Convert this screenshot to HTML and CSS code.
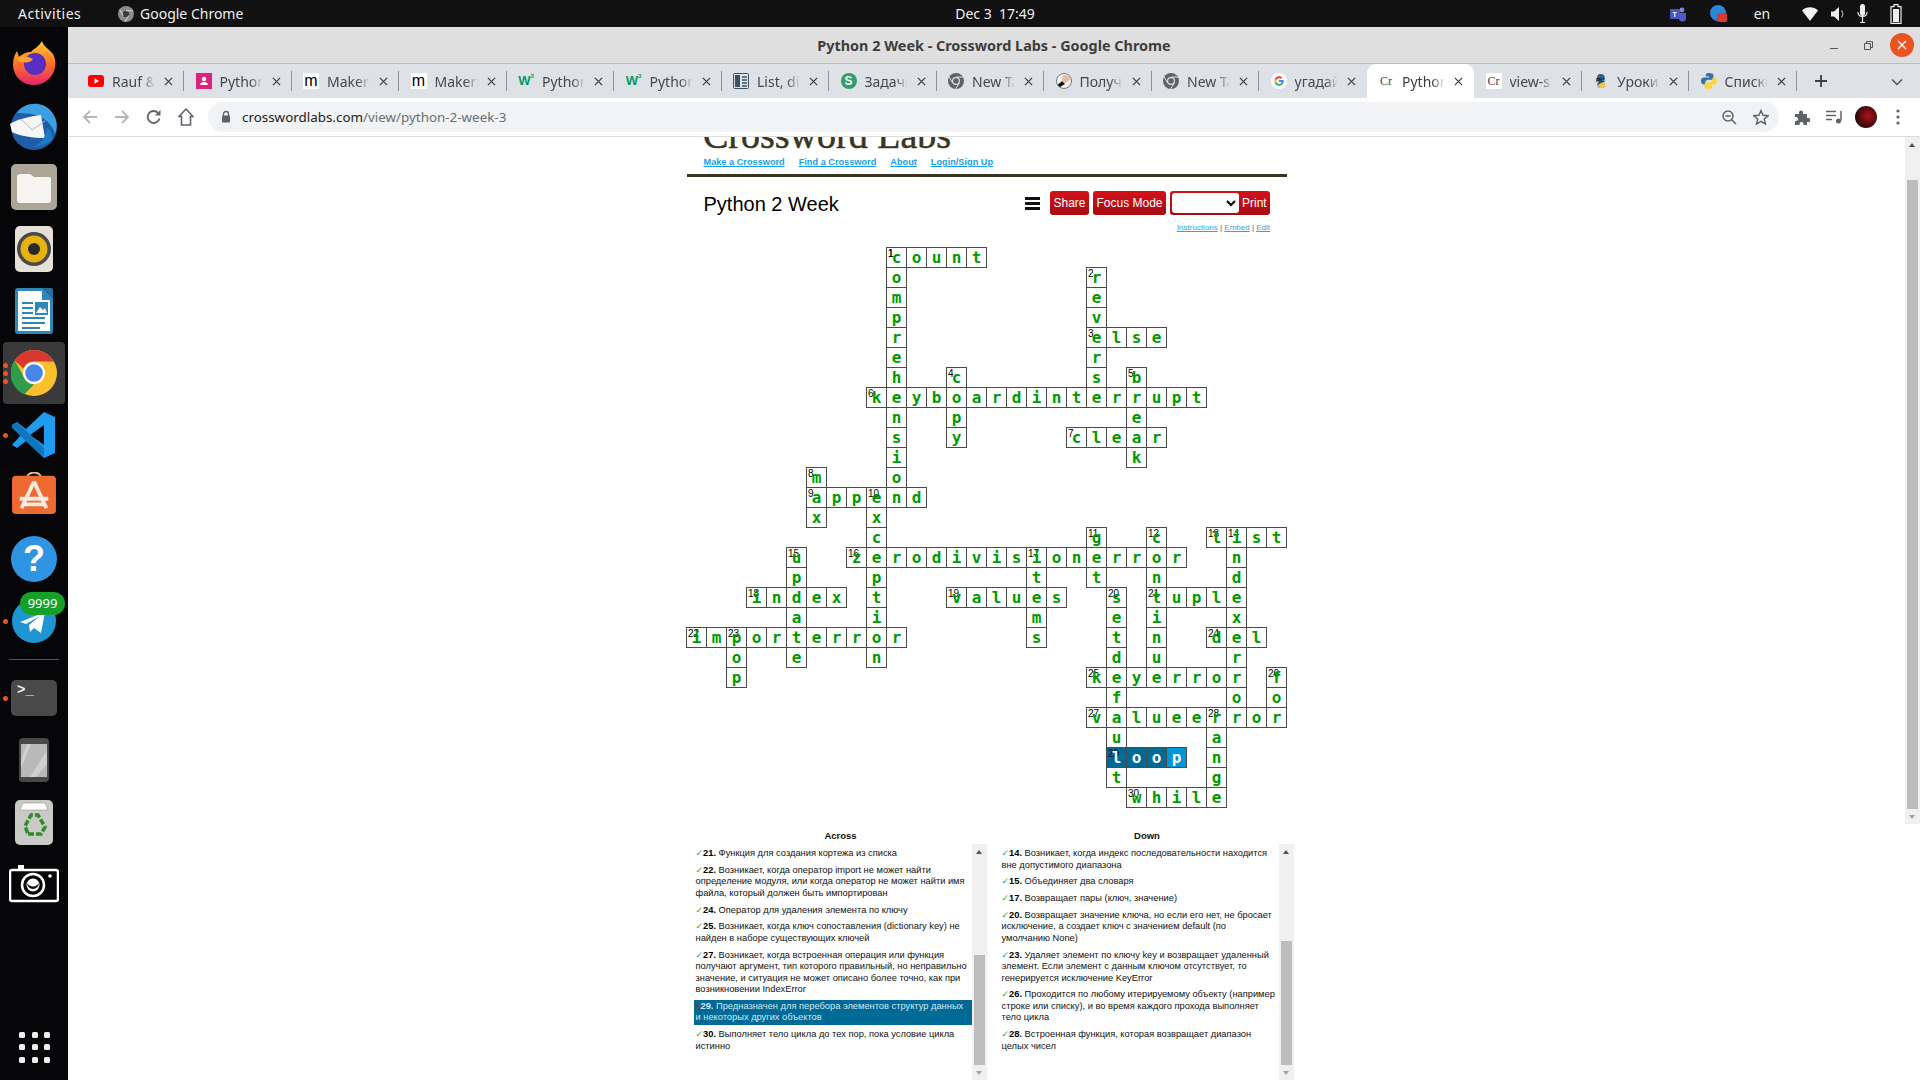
FILE: index.html
```html
<!DOCTYPE html>
<html lang="ru">
<head>
<meta charset="utf-8">
<title>Python 2 Week - Crossword Labs - Google Chrome</title>
<link rel="stylesheet" href="styles.css">
</head>
<body>
<header class="topbar">
  <div class="top-left">
    <span class="activities">Activities</span>
    <svg class="app-ico" width="16" height="16" viewBox="0 0 16 16"><circle cx="8" cy="8" r="8" fill="#8b8b8b"/><circle cx="8" cy="8" r="3.2" fill="#3a3a3a"/><path d="M8 4.8h7M5.2 9.5 1.8 3.6M10.8 9.5 7 15.8" stroke="#ddd" stroke-width="1"/></svg>
    <span class="app-name">Google Chrome</span>
  </div>
  <span class="clock">Dec 3&nbsp;&nbsp;17:49</span>
  <div class="tray">
    <span class="t36"><svg width="18" height="18" viewBox="0 0 18 18"><rect x="1" y="4" width="10" height="10" rx="1" fill="#4b53bc"/><circle cx="13" cy="5" r="2.4" fill="#7b83eb"/><path d="M10 8h7v5a3.5 3.5 0 0 1-7 0z" fill="#5059c9"/><text x="3.5" y="12" class="teams-t">T</text></svg></span>
    <span class="t46"><svg width="18" height="20" viewBox="0 0 18 20"><circle cx="8" cy="9" r="8" fill="#2a86d8"/><rect x="7" y="9" width="10" height="9" rx="1.5" fill="#d33c2e"/></svg></span>
    <span class="t40 lang">en</span>
    <span class="t28"><svg width="16" height="14" viewBox="0 0 16 14"><path d="M0 3.5C4.500-.7 11.500-.7 16 3.500L8 14z" fill="#f2f2f2"/></svg></span>
    <span class="t30"><svg width="16" height="14" viewBox="0 0 16 14"><path d="M0 4.500h3L8 0v14L3 9.500H0z" fill="#eee"/><path d="M10.500 3.500c1.500 2 1.500 5 0 7" stroke="#999" stroke-width="1.300" fill="none"/></svg></span>
    <span class="t18"><svg width="16" height="20" viewBox="0 0 16 20"><rect x="5" y="0" width="5" height="12" rx="2.500" fill="#eee"/><path d="M3 8c0 6 9 6 9 0M7.500 13v5M5 18.500h5" stroke="#eee" stroke-width="1.200" fill="none"/></svg></span>
    <span class="t48"><svg width="12" height="20" viewBox="0 0 12 20"><path d="M4 .6h4v2h3v16.800H1V2.600h3z" fill="none" stroke="#eee" stroke-width="1.200"/><rect x="3" y="5" width="6" height="13" fill="#eee"/></svg></span>
  </div>
</header>
<div class="desk">
  <nav class="dock">
    <div class="dk"><svg width="44" height="46" viewBox="0 0 44 46"><defs><linearGradient id="ff" x1="0" y1="0" x2="0" y2="1"><stop offset="0" stop-color="#ffd030"/><stop offset=".55" stop-color="#ff6a2a"/><stop offset="1" stop-color="#e3246e"/></linearGradient></defs><path d="M30 1c1 5 7 8 11 13 3 5 3 12 1 17-3 8-11 14-20 14C10 45 1 36 1 24c0-5 2-10 4-13l2 6c3-3 7-5 12-5 2-3 8-5 11-11z" fill="url(#ff)"/><circle cx="23" cy="24" r="11" fill="#5a2ec0"/><path d="M4 18c5-3 12-2 17 1-2 3-6 4-10 3-3 0-5-2-7-4z" fill="#ffa52e"/></svg></div>
    <div class="dk"><svg width="50" height="50" viewBox="0 0 50 50"><circle cx="25" cy="27" r="23" fill="#1f5ea6"/><path d="M8 13C15 2 33 0 42 11c6 7 7 15 4 23-3-11-12-18-24-20-5-1-10-1-14-1z" fill="#3b9fe0"/><path d="M1 24c8-5 17-7 31-9l4 23c-12 0-25-2-33-6z" fill="#f6f6f6"/><path d="M12 19l11 11 13-9" fill="none" stroke="#b5b5b5" stroke-width="1"/><path d="M38 28c5 3 6 8 5 12-5 4-12 7-19 7 7-3 13-9 14-19z" fill="#1f78c8"/></svg></div>
    <div class="dk"><svg width="46" height="46" viewBox="0 0 46 46"><rect width="46" height="46" rx="5" fill="#aba698"/><path d="M6 13c0-2 1-3 3-3h10l4 3h15c2 0 2 1 2 3v20c0 2-1 3-3 3H9c-2 0-3-1-3-3z" fill="#f6f5f2"/></svg></div>
    <div class="dk"><svg width="38" height="46" viewBox="0 0 38 46"><rect width="38" height="46" rx="5" fill="#e5e1d7"/><circle cx="19" cy="23" r="17" fill="#4a4a4a"/><circle cx="19" cy="23" r="13.500" fill="#e6b30e"/><circle cx="19" cy="23" r="6" fill="#2a2a2a"/></svg></div>
    <div class="dk"><svg width="38" height="46" viewBox="0 0 38 46"><path d="M2 0h26l10 10v33a3 3 0 0 1-3 3H3a3 3 0 0 1-3-3V2z" fill="#2f86b9"/><path d="M3 3h24v9h8v31H3z" fill="#fff"/><path d="M28 0h8a2 2 0 0 1 2 2v8z" fill="#2b6f9e"/><path d="M7 15h11M7 20h11M7 25h11M7 30h23M7 35h23M7 40h18" stroke="#2f86b9" stroke-width="2"/><rect x="20" y="14" width="13" height="13" fill="#2f86b9"/><path d="M21 25l4-6 3 3 2-2 2 5z" fill="#fff"/></svg></div>
    <div class="dk dk-on"><i class="pip p1"></i><i class="pip p2"></i><i class="pip p3"></i><svg width="46" height="46" viewBox="0 0 46 46"><circle cx="23" cy="23" r="23" fill="#fbc02d"/><path d="M23 0a23 23 0 0 1 20 11.500H23a11.500 11.500 0 0 0-10.600 7L3.700 10.500A23 23 0 0 1 23 0z" fill="#d93831"/><path d="M3.700 10.500 13 27a11.500 11.500 0 0 0 10 7.500l-9.800 10A23 23 0 0 1 3.700 10.500z" fill="#2e9e4c"/><circle cx="23" cy="23" r="11" fill="#fff"/><circle cx="23" cy="23" r="8.800" fill="#4a86e8"/></svg></div>
    <div class="dk"><i class="pip"></i><svg width="44" height="46" viewBox="0 0 44 46"><path d="M32 0l11 5v36l-11 5-18-17-9 7-5-3 9-10-9-10 5-3 9 7z" fill="#1f9cf0"/><path d="M32 13 18 23l14 10z" fill="#06060a"/><path d="M0 13l5-3 27 26v10L0 16z" fill="#0f76bd"/></svg></div>
    <div class="dk"><svg class="store" width="46" height="42" viewBox="0 0 46 44"><path d="M15 8c0-10 16-10 16 0" fill="none" stroke="#eeb788" stroke-width="2"/><rect y="4" width="46" height="40" rx="4" fill="#ed6a32"/><path d="M23 10 10 38M23 10l13 28M8 28h30M12 34h22" stroke="#fbeae0" stroke-width="4" fill="none"/></svg></div>
    <div class="dk"><span class="help">?</span></div>
    <div class="dk"><i class="pip"></i><svg width="44" height="44" viewBox="0 0 44 44"><circle cx="22" cy="22" r="22" fill="#1e96d4"/><path d="M8 23 33 13l-4 21-7-5-4 4-1-7 11-9-14 8z" fill="#fff"/></svg><span class="badge">9999</span></div>
    <hr class="dock-sep">
    <div class="dk"><i class="pip"></i><div class="term"><span>&gt;_</span></div></div>
    <div class="dk"><svg width="30" height="44" viewBox="0 0 30 44"><rect width="30" height="44" rx="4" fill="#484848"/><rect x="2" y="6" width="26" height="33" fill="#b9b9b9"/><path d="M12 6 2 30v-8L8 6zM28 12v14L17 39h-6z" fill="#cfcfcf"/></svg></div>
    <div class="dk"><svg width="38" height="45" viewBox="0 0 38 45"><rect width="38" height="45" rx="5" fill="#c9c9c5"/><path d="M5 10 8 3h22l3 7z" fill="#fff" stroke="#999" stroke-width=".6"/><g fill="none" stroke="#2e8b2e" stroke-width="3.500" stroke-dasharray="6 2"><path d="M13 34h13l4-7-7-12h-7l-6 11z"/></g></svg></div>
    <div class="dk"><svg width="50" height="38" viewBox="0 0 50 38"><path d="M3 5h44a2 2 0 0 1 2 2v27a2 2 0 0 1-2 2H3a2 2 0 0 1-2-2V7a2 2 0 0 1 2-2z" fill="none" stroke="#fff" stroke-width="2.500"/><rect x="9" y="0" width="6" height="4" fill="#fff"/><circle cx="24" cy="20" r="11" fill="none" stroke="#fff" stroke-width="2.500"/><circle cx="24" cy="20" r="6.500" fill="#fff"/><path d="M18 18a6 6 0 0 0 12 0a7 7 0 0 1-12 0" fill="#111"/><circle cx="41" cy="11" r="1.800" fill="#fff"/></svg></div>
    <div class="dk dk-apps"><div class="dots"><i></i><i></i><i></i><i></i><i></i><i></i><i></i><i></i><i></i></div></div>
  </nav>
  <div class="window">
    <div class="titlebar">
      <span class="wintitle">Python 2 Week - Crossword Labs - Google Chrome</span>
      <div class="winbtns">
        <span class="wb"><i class="min"></i></span>
        <span class="wb"><svg width="9" height="9" viewBox="0 0 9 9"><path d="M2.500 2.500V.5h6v6h-2M.5 2.500h6v6h-6z" fill="none" stroke="#555"/></svg></span>
        <span class="wb close"><svg width="10" height="10" viewBox="0 0 10 10"><path d="M1 1l8 8M9 1 1 9" stroke="#fff" stroke-width="1.300"/></svg></span>
      </div>
    </div>
    <div class="tabstrip">
      <div class="tab"><span class="fav"><svg width="16" height="16" viewBox="0 0 16 16"><rect y="2" width="16" height="12" rx="3" fill="#f00"/><path d="M6.500 5.200v5.600L11 8z" fill="#fff"/></svg></span><span class="tt">Rauf &amp; Faik</span><svg class="tx" viewBox="0 0 10 10"><path d="M1 1l8 8M9 1 1 9"/></svg></div>
      <div class="tab"><span class="fav"><svg width="16" height="16" viewBox="0 0 16 16"><rect width="16" height="16" fill="#e0207e"/><circle cx="8" cy="6" r="2.200" fill="#fff"/><path d="M4 12c0-4 8-4 8 0z" fill="#fff"/></svg></span><span class="tt">Python</span><svg class="tx" viewBox="0 0 10 10"><path d="M1 1l8 8M9 1 1 9"/></svg></div>
      <div class="tab"><span class="fav fav-w">m</span><span class="tt">Makers</span><svg class="tx" viewBox="0 0 10 10"><path d="M1 1l8 8M9 1 1 9"/></svg></div>
      <div class="tab"><span class="fav fav-w">m</span><span class="tt">Makers</span><svg class="tx" viewBox="0 0 10 10"><path d="M1 1l8 8M9 1 1 9"/></svg></div>
      <div class="tab"><span class="fav fav-g">W<sup>3</sup></span><span class="tt">Python</span><svg class="tx" viewBox="0 0 10 10"><path d="M1 1l8 8M9 1 1 9"/></svg></div>
      <div class="tab"><span class="fav fav-g">W<sup>3</sup></span><span class="tt">Python</span><svg class="tx" viewBox="0 0 10 10"><path d="M1 1l8 8M9 1 1 9"/></svg></div>
      <div class="tab"><span class="fav"><svg width="16" height="16" viewBox="0 0 16 16"><rect x=".5" y=".5" width="15" height="15" rx="1" fill="#dfe3e8" stroke="#3c5064"/><rect x="2" y="2" width="5" height="12" fill="#3c5064"/><path d="M9 4h5M9 7h5M9 10h5M9 13h5" stroke="#3c5064" stroke-width="1.500"/></svg></span><span class="tt">List, dict</span><svg class="tx" viewBox="0 0 10 10"><path d="M1 1l8 8M9 1 1 9"/></svg></div>
      <div class="tab"><span class="fav fav-s">S</span><span class="tt">Задачи</span><svg class="tx" viewBox="0 0 10 10"><path d="M1 1l8 8M9 1 1 9"/></svg></div>
      <div class="tab"><span class="fav"><svg width="16" height="16" viewBox="0 0 16 16"><circle cx="8" cy="8" r="8" fill="#5f6368"/><circle cx="8" cy="8" r="4" fill="#dee1e6"/><circle cx="8" cy="8" r="2.800" fill="#5f6368"/><path d="M8 4h7.500M4.600 10 1 3.500M11.400 10 7.500 16" stroke="#dee1e6"/></svg></span><span class="tt">New Tab</span><svg class="tx" viewBox="0 0 10 10"><path d="M1 1l8 8M9 1 1 9"/></svg></div>
      <div class="tab"><span class="fav"><svg width="16" height="16" viewBox="0 0 16 16"><circle cx="8" cy="8" r="7.500" fill="#f4f4f4" stroke="#777"/><path d="M7 2l6 1 1 4-5 3-3-3z" fill="#e8b9a0"/><path d="M1.500 12 6 8l3 3-5 3z" fill="#111"/></svg></span><span class="tt">Получить</span><svg class="tx" viewBox="0 0 10 10"><path d="M1 1l8 8M9 1 1 9"/></svg></div>
      <div class="tab"><span class="fav"><svg width="16" height="16" viewBox="0 0 16 16"><circle cx="8" cy="8" r="8" fill="#5f6368"/><circle cx="8" cy="8" r="4" fill="#dee1e6"/><circle cx="8" cy="8" r="2.800" fill="#5f6368"/><path d="M8 4h7.500M4.600 10 1 3.500M11.400 10 7.500 16" stroke="#dee1e6"/></svg></span><span class="tt">New Tab</span><svg class="tx" viewBox="0 0 10 10"><path d="M1 1l8 8M9 1 1 9"/></svg></div>
      <div class="tab nosep"><span class="fav"><svg width="16" height="16" viewBox="0 0 16 16"><circle cx="8" cy="8" r="8" fill="#fff"/><path d="M8 5.200a2.800 2.800 0 0 1 1.900.7l1.400-1.400A4.800 4.800 0 0 0 3.700 6l1.600 1.300A2.900 2.900 0 0 1 8 5.200z" fill="#ea4335"/><path d="M3.700 6a4.800 4.800 0 0 0 0 4l1.600-1.300a2.900 2.900 0 0 1 0-1.400z" fill="#fbbc05"/><path d="M8 12.800a4.700 4.700 0 0 0 3.200-1.200l-1.500-1.200A2.900 2.900 0 0 1 5.300 8.700L3.700 10A4.800 4.800 0 0 0 8 12.800z" fill="#34a853"/><path d="M12.700 7H8v1.900h2.700c-.1.600-.5 1.100-1 1.500l1.500 1.200c1-.9 1.600-2.200 1.600-3.600 0-.4 0-.7-.1-1z" fill="#4285f4"/></svg></span><span class="tt">угадай</span><svg class="tx" viewBox="0 0 10 10"><path d="M1 1l8 8M9 1 1 9"/></svg></div>
      <div class="tab active"><span class="fav fav-c">Cr</span><span class="tt">Python 2</span><svg class="tx" viewBox="0 0 10 10"><path d="M1 1l8 8M9 1 1 9"/></svg></div>
      <div class="tab"><span class="fav fav-c fav-cw">Cr</span><span class="tt">view-s</span><svg class="tx" viewBox="0 0 10 10"><path d="M1 1l8 8M9 1 1 9"/></svg></div>
      <div class="tab"><span class="fav"><svg width="16" height="16" viewBox="0 0 16 16"><path d="M8 1C4 1 4 3 4 8h4c-5 0-5 7 0 7 4 0 4-2 4-7H8c5 0 5-7 0-7z" fill="#2d5f9e"/><path d="M12 8c0 5 0 7-4 7-2 0-3-1-3-3z" fill="#f7c83a"/><text x="3" y="9" class="ru-t">RU</text></svg></span><span class="tt">Уроки</span><svg class="tx" viewBox="0 0 10 10"><path d="M1 1l8 8M9 1 1 9"/></svg></div>
      <div class="tab"><span class="fav"><svg width="16" height="16" viewBox="0 0 16 16"><path d="M8 0C4.800 0 4.800 1.500 4.800 3.500H8.200v1H3C1 4.500 0 6 0 8s1 3.500 3 3.500h1.500V9.400c0-1.600 1.200-2.700 2.700-2.700h3.300c1.300 0 2-.9 2-2V2.200C12.500.800 10.500 0 8 0z" fill="#3572a5"/><path d="M8 16c3.200 0 3.200-1.500 3.200-3.500H7.800v-1H13c2 0 3-1.500 3-3.500s-1-3.500-3-3.500h-1.500v2.100c0 1.600-1.200 2.700-2.700 2.700H5.500c-1.300 0-2 .9-2 2v2.500c0 1.400 2 2.200 4.500 2.200z" fill="#ffd43b"/></svg></span><span class="tt">Списки</span><svg class="tx" viewBox="0 0 10 10"><path d="M1 1l8 8M9 1 1 9"/></svg></div>
      <svg class="plus" width="14" height="14" viewBox="0 0 14 14"><path d="M7 1v12M1 7h12" stroke="#3c4043" stroke-width="1.800"/></svg>
      <svg class="chev" width="12" height="8" viewBox="0 0 12 8"><path d="M1 1.500 6 6.500 11 1.500" fill="none" stroke="#555" stroke-width="1.500"/></svg>
    </div>
    <div class="toolbar">
      <span class="tb"><svg width="16" height="16" viewBox="0 0 16 16"><path d="M15 8H2M8 2 2 8l6 6" fill="none" stroke="#b4b6b9" stroke-width="1.800"/></svg></span>
      <span class="tb"><svg width="16" height="16" viewBox="0 0 16 16"><path d="M1 8h13M8 2l6 6-6 6" fill="none" stroke="#b4b6b9" stroke-width="1.800"/></svg></span>
      <span class="tb"><svg width="16" height="16" viewBox="0 0 16 16"><path d="M13.500 9.500A6 6 0 1 1 12 3.800" fill="none" stroke="#5f6368" stroke-width="1.800"/><path d="M14.500 1v5.500H9z" fill="#5f6368"/></svg></span>
      <span class="tb"><svg width="16" height="18" viewBox="0 0 16 18"><path d="M8 1 1 8.500h2.500V17h9V8.500H15z" fill="none" stroke="#5f6368" stroke-width="1.600"/></svg></span>
      <div class="omni">
        <svg class="lock" width="10" height="13" viewBox="0 0 10 13"><path d="M2.500 6V4a2.500 2.500 0 0 1 5 0v2" fill="none" stroke="#5f6368" stroke-width="1.300"/><rect x="1" y="5.500" width="8" height="7" rx="1" fill="#5f6368"/></svg>
        <span class="url"><b>crosswordlabs.com</b>/view/python-2-week-3</span>
        <svg class="om-r" width="16" height="16" viewBox="0 0 16 16"><circle cx="7" cy="7" r="5" fill="none" stroke="#5f6368" stroke-width="1.500"/><path d="M10.500 10.500 15 15M4.500 7h5" stroke="#5f6368" stroke-width="1.500"/></svg>
        <svg class="om-s" width="16" height="16" viewBox="0 0 16 16"><path d="M8 1.500 10 6.300l5.200.4-4 3.400 1.300 5L8 12.400l-4.500 2.700 1.300-5-4-3.400L6 6.300z" fill="none" stroke="#5f6368" stroke-width="1.400"/></svg>
      </div>
      <div class="tb-right">
        <span class="tb"><svg width="16" height="16" viewBox="0 0 16 16"><path d="M1 5h4V3.500a2 2 0 0 1 4 0V5h4v4h1.500a2 2 0 0 1 0 4H13v3H9.500v-1a2 2 0 0 0-4 0v1H1v-4h1a2 2 0 0 0 0-4H1z" fill="#5f6368"/></svg></span>
        <span class="tb"><svg width="16" height="14" viewBox="0 0 16 14"><path d="M0 1.500h10M0 5.500h10M0 9.500h6M15 1v9.500" stroke="#5f6368" stroke-width="1.500" fill="none"/><circle cx="12.500" cy="11" r="2.500" fill="#5f6368"/></svg></span>
        <span class="tb"><span class="avatar"></span></span>
        <span class="tb"><svg width="4" height="16" viewBox="0 0 4 16"><circle cx="2" cy="2" r="1.600" fill="#5f6368"/><circle cx="2" cy="8" r="1.600" fill="#5f6368"/><circle cx="2" cy="14" r="1.600" fill="#5f6368"/></svg></span>
      </div>
    </div>
    <main class="viewport">
      <div class="page">
        <div class="logo"><span>Crossword Labs</span></div>
        <div class="nav"><a>Make a Crossword</a><a>Find a Crossword</a><a>About</a><a>Login/Sign Up</a></div>
        <div class="rule"></div>
        <div class="head">
          <h1>Python 2 Week</h1>
          <div class="actions">
            <span class="burger"><i></i><i></i><i></i></span>
            <span class="btn b-share">Share</span>
            <span class="btn b-focus">Focus Mode</span>
            <span class="btn btn-print"><select class="sel" aria-label="Print"><option></option></select><span>Print</span></span>
          </div>
        </div>
        <div class="minilinks"><a>Instructions</a> | <a>Embed</a> | <a>Edit</a></div>
        <div class="grid" id="grid"></div>
        <div class="clues">
          <section class="col col-a">
            <h2>Across</h2>
            <div class="box">
              <ol class="list">
                <li><em>✓</em><b>21.</b> Функция для создания кортежа из списка</li>
                <li><em>✓</em><b>22.</b> Возникает, когда оператор import не может найти определение модуля, или когда оператор не может найти имя файла, который должен быть импортирован</li>
                <li><em>✓</em><b>24.</b> Оператор для удаления элемента по ключу</li>
                <li><em>✓</em><b>25.</b> Возникает, когда ключ сопоставления (dictionary key) не найден в наборе существующих ключей</li>
                <li><em>✓</em><b>27.</b> Возникает, когда встроенная операция или функция получают аргумент, тип которого правильный, но неправильно значение, и ситуация не может описано более точно, как при возникновении IndexError</li>
                <li class="cur"><em class="bad">x</em><b>29.</b> Предназначен для перебора элементов структур данных и некоторых других объектов</li>
                <li><em>✓</em><b>30.</b> Выполняет тело цикла до тех пор, пока условие цикла истинно</li>
              </ol>
              <div class="sb sb-a"><i class="up"></i><i class="thumb"></i><i class="dn"></i></div>
            </div>
          </section>
          <section class="col col-d">
            <h2>Down</h2>
            <div class="box">
              <ol class="list">
                <li><em>✓</em><b>14.</b> Возникает, когда индекс последовательности находится вне допустимого диапазона</li>
                <li><em>✓</em><b>15.</b> Объединяет два словаря</li>
                <li><em>✓</em><b>17.</b> Возвращает пары (ключ, значение)</li>
                <li><em>✓</em><b>20.</b> Возвращает значение ключа, но если его нет, не бросает исключение, а создает ключ с значением default (по<br>умолчанию None)</li>
                <li><em>✓</em><b>23.</b> Удаляет элемент по ключу key и возвращает удаленный элемент. Если элемент с данным ключом отсутствует, то генерируется исключение KeyError</li>
                <li><em>✓</em><b>26.</b> Проходится по любому итерируемому объекту (например строке или списку), и во время каждого прохода выполняет тело цикла</li>
                <li><em>✓</em><b>28.</b> Встроенная функция, которая возвращает диапазон целых чисел</li>
              </ol>
              <div class="sb sb-d"><i class="up"></i><i class="thumb"></i><i class="dn"></i></div>
            </div>
          </section>
        </div>
      </div>
      <div class="pagesb"><i class="up"></i><i class="thumb"></i><i class="dn"></i></div>
    </main>
  </div>
</div>
<script src="script.js"></script>
</body>
</html>
```
FILE: styles.css
```css
*{box-sizing:border-box}
html,body{margin:0;height:100%;overflow:hidden}
body{width:1920px;height:1080px;display:flex;flex-direction:column;background:#fff;font-family:"Liberation Sans",Arial,sans-serif}
.topbar{height:27px;flex:none;background:#111;color:#f0f0f0;display:flex;align-items:center;font:14px "Noto Sans",sans-serif}
.top-left{width:955px;display:flex;align-items:center;flex:none}
.activities{margin-left:18px;width:100px;letter-spacing:.5px}
.app-ico{flex:none}
.app-name{margin-left:6px}
.clock{width:80px;white-space:nowrap;text-align:center}
.tray{margin-left:auto;display:flex;align-items:center;width:260px;height:27px}
.tray>span{display:flex;align-items:center;justify-content:center;flex:none}
.t36{width:36px}.t46{width:46px}.t40{width:40px}.t28{width:28px;margin-left:14px}.t30{width:30px}.t18{width:18px}.t48{width:48px}
.teams-t{font:bold 7px "Liberation Sans",sans-serif;fill:#fff}
.ru-t{font:bold 6px "Liberation Sans",sans-serif;fill:#111}
.lang{font-size:14px}
.desk{flex:1;display:flex;min-height:0}
.dock{width:68px;flex:none;background:#060609;display:flex;flex-direction:column;padding:5px 0 2px}
.dk{height:62px;flex:none;display:flex;align-items:center;justify-content:center;position:relative}
.dk-on{background:#3a3a3a;border-radius:4px;margin:0 3px}
.pip{position:absolute;left:3px;top:50%;width:5px;height:5px;margin-top:-2.500px;border-radius:50%;background:#e95420}
.dk-on .pip{left:0}
.dk-on .p1{margin-top:-10.500px}.dk-on .p3{margin-top:5.500px}
.store{margin-bottom:8px}
.help{width:46px;height:46px;border-radius:50%;background:#2f95e3;color:#fff;font:bold 36px/46px "Liberation Sans",sans-serif;text-align:center}
.badge{position:absolute;left:20px;top:2px;width:45px;height:23px;border-radius:12px;background:#16a02a;color:#fff;font:13px/23px "Noto Sans",sans-serif;text-align:center}
.dock-sep{width:50px;height:1px;margin:7px 0 7px 9px;border:0;background:#555;flex:none}
.term{width:46px;height:36px;border-radius:5px;background:#4a4a4a;color:#eee;font:bold 14px/16px "Liberation Mono",monospace;padding:2px 0 0 6px}
.dk-apps{margin-top:auto}
.dots{width:30px;display:grid;grid-template-columns:repeat(3,6px);gap:6.500px}
.dots i{width:6px;height:6px;border-radius:1.500px;background:#eee;display:block}
.window{flex:1;min-width:0;display:flex;flex-direction:column}
.titlebar{height:37px;flex:none;background:#dfdfdf;border-bottom:1px solid #bcbcbc;display:flex;align-items:center;justify-content:center;position:relative;font:bold 14.400px "Noto Sans",sans-serif;color:#3d3d3d}
.winbtns{position:absolute;right:6px;top:6px;display:flex;align-items:center}
.wb{width:34px;height:24px;display:flex;align-items:center;justify-content:center}
.min{width:8px;height:1px;background:#555;display:block;margin-top:6px}
.wb.close{width:24px;height:24px;border-radius:50%;background:#e95420;margin-left:5px}
.tabstrip{height:34px;flex:none;background:#dee1e6;display:flex;align-items:center;padding-left:8.500px;position:relative}
.tab{width:107.500px;height:34px;flex:none;display:flex;align-items:center;padding-left:11.500px;position:relative;color:#45484d;font:14px "Noto Sans",sans-serif}
.tab::after{content:"";position:absolute;right:0;top:7px;height:20px;width:1px;background:#8f9296}
.tab.nosep::after,.tab.active::after{display:none}
.active{background:#fff;border-radius:9px 9px 0 0;color:#3c4043}
.fav{width:16px;height:16px;flex:none;display:flex;align-items:center;justify-content:center;overflow:hidden}
.fav-w{background:#fff;color:#000;font:16px/16px "Liberation Sans",sans-serif}
.fav-g{color:#04996a;font:bold 13px/16px "Liberation Sans",sans-serif}
.fav-g sup{font-size:6px;line-height:6px;align-self:flex-start;color:#04996a}
.fav-s{background:#2f9e6a;color:#fff;border-radius:50%;font:bold 12px/16px "Liberation Sans",sans-serif}
.fav-c{color:#444;font:12px/16px "Liberation Serif",serif}
.fav-cw{background:#fff}
.tt{width:43px;margin-left:8px;white-space:nowrap;overflow:hidden;flex:none;-webkit-mask-image:linear-gradient(90deg,#000 70%,transparent 100%);mask-image:linear-gradient(90deg,#000 70%,transparent 100%)}
.tx{width:9px;height:9px;margin-left:9px;flex:none;stroke:#3c4043;stroke-width:1.400;fill:none}
.plus{margin-left:17px;flex:none}
.chev{position:absolute;right:17px;top:14px}
.toolbar{height:39px;flex:none;background:#fff;border-bottom:1px solid #dcdcdc;display:flex;align-items:center;padding:0 5px 1px 6px}
.tb{width:32px;height:30px;flex:none;display:flex;align-items:center;justify-content:center}
.omni{width:1571px;height:30px;margin-left:6px;background:#f1f3f4;border-radius:15px;flex:none;display:flex;align-items:center;padding:0 9px 0 13px;font:13.400px "Noto Sans",sans-serif;color:#6a6e73}
.lock{flex:none}
.url{margin-left:11px;white-space:nowrap}
.url b{font-weight:400;color:#202124}
.om-r{margin-left:auto;flex:none}
.om-s{margin-left:16px;margin-right:1px;flex:none}
.tb-right{display:flex;margin-left:7px}
.avatar{width:22px;height:22px;border-radius:50%;background:radial-gradient(circle at 60% 45%,#b3121a 0,#5a0a10 45%,#15090b 80%);display:block}
.viewport{flex:1;min-height:0;display:flex;align-items:flex-start;padding-left:619px;background:#fff;overflow:hidden}
.page{width:600px;flex:none}
.logo{height:13px;overflow:hidden;padding-left:16px;color:#3a3520;font:38px/40px "Liberation Serif",serif;-webkit-text-stroke:.5px #3a3520}
.logo span{display:block;height:40px;margin-top:-22px;white-space:nowrap}
.nav{display:flex;gap:14px;padding:6px 0 0 16.500px;font:bold 9.200px/12px "Liberation Sans",sans-serif}
.nav a,.minilinks a{color:#1a9fe6;text-decoration:underline}
.rule{height:3px;background:#3a3520;margin-top:6px}
.head{height:24px;margin-top:14px;display:flex;align-items:center;padding:0 17px 0 16.500px}
h1{margin:1px 0 0;font:400 20px/26px "Liberation Sans",sans-serif;color:#000}
.actions{margin-left:auto;display:flex;align-items:center;gap:4px}
.burger{width:15px;display:flex;flex-direction:column;gap:2px;margin-right:6px}
.burger i{height:3px;background:#111;display:block}
.btn{height:24px;border-radius:3px;background:linear-gradient(#d5101a,#a50c12);color:#fff;font:12px/23px "Liberation Sans",sans-serif;display:flex;align-items:center;justify-content:center}
.b-share{width:39px}
.b-focus{width:73px}
.btn-print{width:100px;padding:0 3px 0 2px;gap:3px;justify-content:flex-start}
.sel{width:67px;height:20px;border:0;border-radius:3px;background-color:#fff;font:12px "Liberation Sans",sans-serif;margin:0;padding:0}
.minilinks{height:10px;margin-top:8px;padding-right:17px;text-align:right;font:8px/10px "Liberation Sans",sans-serif;color:#555}
.minilinks a{color:#2aa6e6}
.grid{display:grid;grid-template-columns:repeat(30,20px);grid-template-rows:repeat(28,20px);margin:14px 0 0 -1px;height:561px}
.cell{width:21px;height:21px;border:1px solid #4a4a4a;background:#fff;color:#009a00;position:relative;isolation:isolate;font:bold 16px/19px "DejaVu Sans Mono",monospace;text-align:center}
.cell sup{position:absolute;z-index:-1;left:1px;top:1px;font:400 10px/10px "Liberation Sans",sans-serif;color:#000}
.cell.hl{background:#006a96;color:#fff}
.cell.hl2{background:#0095d6;color:#fff}
.clues{display:flex;gap:13px;padding-left:7px;margin-top:24px}
.col{flex:none}
.col-a{width:293px}
.col-d{width:294px}
h2{margin:0;height:8px;font:bold 9.500px/8px "Liberation Sans",sans-serif;text-align:center;color:#111}
.box{height:236px;margin-top:4px;display:flex}
.list{flex:1;min-width:0;margin:0;padding:3px 0 0;list-style:none;font:9.300px/11.500px "Liberation Sans",sans-serif;color:#111}
.list li{padding:1px 1.500px;margin-bottom:3.300px}
.list b{color:#000}
.list em{font:bold 9px/10px "DejaVu Sans",sans-serif;color:#3aa32e}
.list em.bad{color:#b0201c;font-family:"Liberation Sans",sans-serif;font-size:10px;font-weight:400}
.list .cur{background:#006a96;color:#cfe8f4}
.list .cur b{color:#cfe8f4}
.sb,.pagesb{width:15px;flex:none;background:#f0f0f0;display:flex;flex-direction:column;align-items:center;position:relative}
.up,.dn{position:absolute;left:4px;width:0;height:0;border-left:3.500px solid transparent;border-right:3.500px solid transparent}
.up{top:6px;border-bottom:4px solid #505050}
.dn{bottom:5px;border-top:4px solid #a3a3a3}
.thumb{position:absolute;left:2px;right:2px;background:#bdbdbd;display:block}
.sb-a .thumb{top:111px;height:110px}
.sb-d .thumb{top:97px;height:124px}
.pagesb{height:687px;margin-left:auto}
.pagesb .thumb{top:43px;height:629px}
```
FILE: script.js
```js
var words = [
  [1,'a',0,10,'count'],[1,'d',0,10,'comprehension'],[2,'d',1,20,'reverse'],[3,'a',4,20,'else'],
  [4,'d',6,13,'copy'],[5,'d',6,22,'break'],[6,'a',7,9,'keyboardinterrupt'],[7,'a',9,19,'clear'],
  [8,'d',11,6,'max'],[9,'a',12,6,'append'],[10,'d',12,9,'exception'],[11,'d',14,20,'get'],
  [12,'d',14,23,'continue'],[13,'a',14,26,'list'],[14,'d',14,27,'indexerror'],[15,'d',15,5,'update'],
  [16,'a',15,8,'zerodivisionerror'],[17,'d',15,17,'items'],[18,'a',17,3,'index'],[19,'a',17,13,'values'],
  [20,'d',17,21,'setdefault'],[21,'a',17,23,'tuple'],[22,'a',19,0,'importerror'],[23,'d',19,2,'pop'],
  [24,'a',19,26,'del'],[25,'a',21,20,'keyerror'],[26,'d',21,29,'for'],[27,'a',23,20,'valueerror'],
  [28,'d',23,26,'range'],[29,'a',25,21,'loop'],[30,'a',27,22,'while']
];
var grid = document.getElementById('grid'), cells = {};
words.forEach(function (w) {
  for (var i = 0; i < w[4].length; i++) {
    var r = w[2] + (w[1] === 'd' ? i : 0), c = w[3] + (w[1] === 'a' ? i : 0), k = r + '_' + c;
    if (!cells[k]) {
      var el = document.createElement('div');
      el.className = 'cell';
      el.style.gridRow = r + 1;
      el.style.gridColumn = c + 1;
      el.textContent = w[4][i];
      grid.appendChild(el);
      cells[k] = el;
    }
    if (i === 0) {
      var n = document.createElement('sup');
      n.textContent = w[0];
      cells[k].appendChild(n);
    }
    if (w[0] === 29) cells[k].className = 'cell ' + (i === 3 ? 'hl2' : 'hl');
  }
});
```
